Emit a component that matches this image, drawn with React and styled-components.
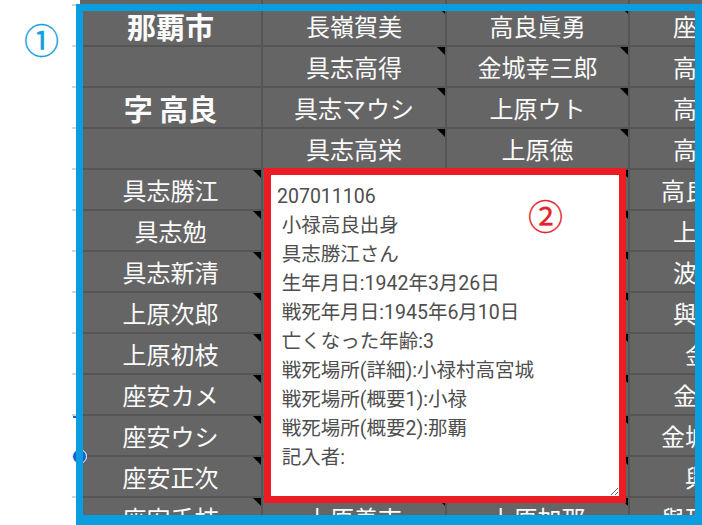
import React from "react";
import styled, { createGlobalStyle } from "styled-components";

const GlobalStyle = createGlobalStyle`
  html, body {
    margin: 0;
    padding: 0;
    background: #fff;
    overflow: hidden;
  }
`;

const COLS = [183, 184, 183, 184];

const rows = [
  [{ t: "那覇市", head: true }, "長嶺賀美", "高良眞勇", "座安カナ"],
  [{ t: "" }, "具志高得", "金城幸三郎", "高良カマ"],
  [{ t: "字 高良", head: true }, "具志マウシ", "上原ウト", "高良ナビ"],
  [{ t: "" }, "具志高栄", "上原徳", "高良ツル"],
  ["具志勝江", "上原カマド", "上原ナベ", "高良眞次郎"],
  ["具志勉", "上原松", "金城カメ", "上原ウシ"],
  ["具志新清", "上原清", "金城ウト", "波平カメ"],
  ["上原次郎", "上原ツル", "金城松", "與儀マツ"],
  ["上原初枝", "上原マツ", "金城清", "金城清"],
  ["座安カメ", "上原ウシ", "金城ナベ", "金城カマ"],
  ["座安ウシ", "上原次郎", "金城トミ", "金城トミ子"],
  ["座安正次", "上原春", "金城栄", "與儀仁"],
  ["座安千枝", "上原善吉", "上原加那", "與那嶺ウシ"],
];

const note = `207011106
 小禄高良出身
 具志勝江さん
 生年月日:1942年3月26日
 戦死年月日:1945年6月10日
 亡くなった年齢:3
 戦死場所(詳細):小禄村高宮城
 戦死場所(概要1):小禄
 戦死場所(概要2):那覇
 記入者:`;

const App = () => {
  return (
    <Screen>
      <GlobalStyle />
      <Sheet>
        <Row $h={6}>
          <Gutter />
          {COLS.map((w, i) => (
            <Cell key={i} $w={w} />
          ))}
        </Row>
        {rows.map((r, ri) => (
          <Row key={ri}>
            <Gutter />
            {r.map((c, ci) => {
              const cell = typeof c === "string" ? { t: c } : c;
              return (
                <Cell
                  key={ci}
                  $w={COLS[ci]}
                  $head={cell.head}
                  $note={!!cell.t && !cell.head}
                >
                  {cell.t}
                </Cell>
              );
            })}
          </Row>
        ))}
      </Sheet>

      <SelTick />
      <SelHandle />
      <Frame />
      <Mark $color="#0ea0de" $x={24} $y={21}>
        ①
      </Mark>

      <CommentBox>
        <CommentText readOnly defaultValue={note} />
      </CommentBox>
      <Mark $color="#e3232b" $x={528} $y={197}>
        ②
      </Mark>
    </Screen>
  );
};

export default App;

const Screen = styled.div`
  position: relative;
  width: 702px;
  height: 525px;
  overflow: hidden;
  font-family: "Noto Sans CJK JP", "Noto Sans", sans-serif;
`;

const Sheet = styled.div`
  display: flex;
  flex-direction: column;
`;

const Row = styled.div`
  display: flex;
  flex-shrink: 0;
  height: ${(p) => p.$h || 41}px;
  overflow: hidden;
`;

const Gutter = styled.div`
  position: relative;
  width: 80px;
  flex-shrink: 0;
  background: #fff;
  &::after {
    content: "";
    position: absolute;
    right: 0;
    bottom: 0;
    width: 8px;
    height: 2px;
    background: #d6d6d6;
  }
`;

const Cell = styled.div`
  position: relative;
  box-sizing: border-box;
  width: ${(p) => p.$w}px;
  flex-shrink: 0;
  display: flex;
  align-items: center;
  justify-content: center;
  white-space: nowrap;
  background: #656565;
  border-right: 2px solid #555;
  border-bottom: 2px solid #555;
  color: #fbfbfb;
  font-size: ${(p) => (p.$head ? 29 : 24)}px;
  font-weight: ${(p) => (p.$head ? 700 : 400)};
  &::after {
    content: "";
    display: ${(p) => (p.$note ? "block" : "none")};
    position: absolute;
    top: 0;
    right: 0;
    border-left: 8px solid transparent;
    border-top: 8px solid #000;
  }
`;

const Frame = styled.div`
  position: absolute;
  left: 76px;
  top: 4px;
  width: 626px;
  height: 521px;
  box-sizing: border-box;
  border: 7px solid #0a9ee0;
  border-bottom-width: 10px;
  pointer-events: none;
`;

const SelTick = styled.div`
  position: absolute;
  left: 73px;
  top: 416px;
  width: 4px;
  height: 2px;
  background: #1a5fd6;
`;

const SelHandle = styled.div`
  position: absolute;
  left: 72px;
  top: 449px;
  width: 13px;
  height: 13px;
  border-radius: 50%;
  background: #1a5fd6;
  border: 1px solid #fff;
`;

const Mark = styled.span`
  position: absolute;
  left: ${(p) => p.$x}px;
  top: ${(p) => p.$y}px;
  color: ${(p) => p.$color};
  font-family: "Noto Sans CJK JP", sans-serif;
  font-size: 35px;
  line-height: 1;
  -webkit-text-stroke: 0.3px ${(p) => p.$color};
`;

const CommentBox = styled.div`
  position: absolute;
  left: 264px;
  top: 168px;
  width: 362px;
  height: 335px;
  box-sizing: border-box;
  display: flex;
  border: 7px solid #ec1c24;
  background: #fff;
`;

const CommentText = styled.textarea`
  flex: 1;
  margin: 0;
  padding: 7px 6px;
  border: none;
  outline: none;
  resize: both;
  overflow: hidden;
  background: #fff;
  color: #4e4e4e;
  font-family: Roboto, "Noto Sans CJK JP", sans-serif;
  font-size: 19.5px;
  line-height: 29px;
  white-space: pre;
`;
